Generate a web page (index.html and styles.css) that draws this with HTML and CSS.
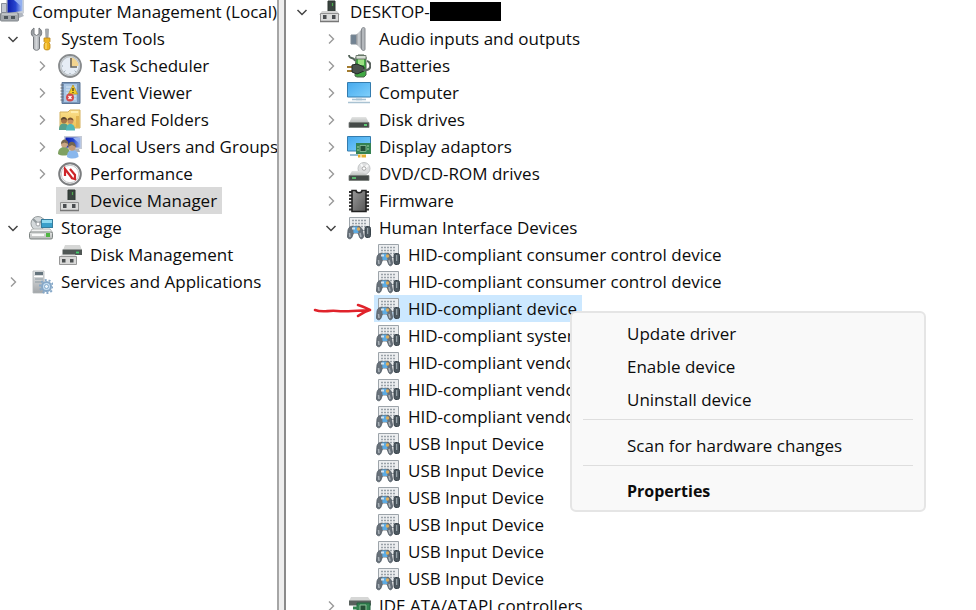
FILE: index.html
```
<!DOCTYPE html>
<html lang="en">
<head>
<meta charset="utf-8">
<title>Computer Management</title>
<link rel="stylesheet" href="styles.css">
</head>
<body>
<svg class="sprite" aria-hidden="true">
  <defs>
    <linearGradient id="metal" x1="0" y1="0" x2="0" y2="1"><stop offset="0" stop-color="#e6e8e9"/><stop offset="1" stop-color="#a2a6a9"/></linearGradient>
    <linearGradient id="metalx"><stop offset="0" stop-color="#8b8f94"/><stop offset=".5" stop-color="#d4d7da"/><stop offset="1" stop-color="#7e8389"/></linearGradient>
    <linearGradient id="screen" x1="0" y1="0" x2="1" y2="1"><stop offset="0" stop-color="#45a9ee"/><stop offset="1" stop-color="#7fd0fb"/></linearGradient>
    <linearGradient id="navy"><stop offset="0" stop-color="#0b1dab"/><stop offset=".55" stop-color="#2746cf"/><stop offset="1" stop-color="#a9c4f3"/></linearGradient>
    <linearGradient id="folder" x1="0" y1="0" x2="0" y2="1"><stop offset="0" stop-color="#fbe08c"/><stop offset="1" stop-color="#ecc258"/></linearGradient>
    <linearGradient id="slab" x1="0" y1="0" x2="0" y2="1"><stop offset="0" stop-color="#e4e5e4"/><stop offset="1" stop-color="#b6b9b8"/></linearGradient>
    <linearGradient id="chipfill" x1="0" y1="0" x2="1" y2="1"><stop offset="0" stop-color="#9a9a9a"/><stop offset="1" stop-color="#555"/></linearGradient>
  </defs>
  <symbol id="down" viewBox="0 0 12 12"><path d="M1.500 4l4.500 4.500 4.500-4.500" fill="none" stroke="#444" stroke-width="1.500"/></symbol>
  <symbol id="right" viewBox="0 0 12 12"><path d="M4 1.500l4.500 4.500-4.500 4.500" fill="none" stroke="#999" stroke-width="1.400"/></symbol>
  <symbol id="pc" viewBox="0 0 24 24">
    <path d="M6 0h18v13l-4 3H6z" fill="#c9ced6"/><path d="M7.500 0h15v11l-15 2z" fill="url(#navy)"/><path d="M14 0h8v7z" fill="#92aff0"/>
    <path d="M1.500 3.500h5v9h-5z" fill="#c2c7cf" stroke="#8a909b"/><path d="M16 13h6l2 3-5 2z" fill="#b0b6bf"/>
    <rect x=".5" y="13" width="18" height="8" rx="1" fill="#a3a8ac" stroke="#81878c"/><path d="M4 16h4v3H4zm7 0h4v3h-4z" fill="#4d565c"/><path d="M2 14h15" stroke="#e0e3e5"/>
  </symbol>
  <symbol id="tools" viewBox="0 0 24 24">
    <path d="M5 1v6l2.500 1.500L10 7V1c3.500 2 3.500 7 .5 9v11c0 3-6 3-6 0V10C1.500 8 1.500 3 5 1z" fill="url(#metalx)" stroke="#74787c"/>
    <path d="M16.500 2h3L19 12h-2z" fill="#a9adb0" stroke="#8f9397" stroke-width=".7"/><path d="M15 11h6v3.500l-1 1 1 2v4c-1 2-5 2-6 0v-4l1-2-1-1z" fill="#efb41f" stroke="#b98416" stroke-width=".8"/><path d="M17 16v6" stroke="#ffe382"/>
  </symbol>
  <symbol id="clock" viewBox="0 0 24 24">
    <circle cx="12" cy="12" r="11" fill="#e7eef5" stroke="#888b8d" stroke-width="1.800"/><circle cx="12" cy="12" r="9.300" fill="#e6edf5" stroke="#bcc2c6" stroke-width="1.300"/>
    <path d="M12 12V3.500A8.500 8.500 0 0 1 20.500 12z" fill="#f2d48f"/><path d="M13 4v9h6" fill="none" stroke="#6a655c" stroke-width="1.600"/><path d="M12 20v-1M4 12h1M6.300 17.700l1-1M17.700 17.700l-1-1" stroke="#8e9da9"/>
  </symbol>
  <symbol id="event" viewBox="0 0 24 24">
    <path d="M4 1.500h18v21H4z" fill="#7b99bd" stroke="#5d7696"/><path d="M6 3h13v18H6z" fill="#a9c6e4"/><path d="M8 6h10M8 9h10M8 12h10M8 15h10M8 18h10" stroke="#d8e7f4"/>
    <path d="M2.500 4h3m-3 3h3m-3 3h3m-3 3h3m-3 3h3m-3 3h3" stroke="#646c76" stroke-width="1.200"/>
    <path d="M15 4l4.500 9h-9z" fill="#f4ce29" stroke="#ba931a" stroke-width=".8"/><path d="M15 7v3m0 1v1" stroke="#443a16" stroke-width="1.300"/><circle cx="12" cy="16.500" r="4" fill="#d4494b"/><path d="M10.500 15l3 3m0-3l-3 3" stroke="#fff" stroke-width="1.200"/>
  </symbol>
  <symbol id="shared" viewBox="0 0 24 24">
    <path d="M2 4h8l2-2h10v18H2z" fill="url(#folder)" stroke="#d3b05f"/><path d="M13 4h7" stroke="#fff3be" stroke-width="1.500"/><path d="M18 8h3v11h-3z" fill="#e2b551"/>
    <path d="M1 22c0-5 2-6.500 5-6.500s4.500 2 4.500 6.500z" fill="#56a08c"/><circle cx="6" cy="12.500" r="3" fill="#a57446"/><path d="M2.800 12c.5-4 5.500-4 6.300 0l-3-1z" fill="#59452d"/>
    <path d="M8 22.500c0-5 2-6.500 4.500-6.500s4.500 2 4.500 6.500z" fill="#51b7b8"/><circle cx="12.500" cy="13" r="3" fill="#c89062"/><path d="M9.300 12.500c.5-4 5.500-4 6.300 0l-3-1z" fill="#77522f"/>
  </symbol>
  <symbol id="users" viewBox="0 0 24 24">
    <path d="M6 1h18v13H6z" fill="#c5cad5"/><path d="M7.500 2.500h15v10h-15z" fill="url(#navy)"/><path d="M15 3h7v6z" fill="#9bb5ee"/><path d="M14 14h7l1 3h-8z" fill="#b0b5bb"/>
    <path d="M0 19c0-5 3-7 6-7s6 2 6 7c-4 2-9 2-12 0z" fill="#7fa162"/><circle cx="6.500" cy="9" r="3.500" fill="#c9a583"/><path d="M3 9c0-6 7-6 7.500 0l-4-1.500z" fill="#77674f"/>
    <path d="M9 22c0-5 2-7 5.500-7s6 2 6 7c-4 2-8 2-11.500 0z" fill="#89b7ed"/><circle cx="14" cy="12" r="3.700" fill="#c39b78"/><path d="M10 12c0-7 7.500-7 8 0l-4-2z" fill="#74654e"/>
  </symbol>
  <symbol id="perf" viewBox="0 0 24 24">
    <circle cx="12" cy="12" r="10.800" fill="#f6f6f6" stroke="#7b7d7f" stroke-width="2"/><circle cx="12" cy="12" r="8.700" fill="#fff" stroke="#c4c5c7"/>
    <path d="M7 14V7l7 9M12 7l5 6v4l-4-1" fill="none" stroke="#ce2529" stroke-width="2.200"/>
  </symbol>
  <symbol id="device" viewBox="0 0 24 24">
    <path d="M10 1h7v11h-7z" fill="#39443f" stroke="#2c3431"/><path d="M14.500 3v3" stroke="#4ca64b" stroke-width="1.200"/><path d="M4 11h15l3 4H1z" fill="#d4d4d3"/>
    <path d="M2.500 13.500h18v8h-18z" fill="#dcdcdb" stroke="#929292"/><path d="M2 21.500h19" stroke="#777" stroke-width="1.500"/><path d="M5 15h3.500v4H5zm9 0h3.500v4H14z" fill="#4a4d50"/>
  </symbol>
  <symbol id="storage" viewBox="0 0 24 24">
    <circle cx="9" cy="7.500" r="7" fill="#d4d9db" stroke="#979d9e"/><path d="M9 8L4 3M9 8l6-5" stroke="#929a9d" stroke-width="2"/><circle cx="9" cy="8" r="2" fill="#fff" stroke="#9da2a6"/>
    <rect x="12.500" y="3.500" width="11" height="8" fill="#3ba0ca" stroke="#367d9d"/><path d="M13 4h10v3H13z" fill="#91daf0"/>
    <path d="M3 13h18l3 4H1z" fill="#f1f2f1" stroke="#b5b8b7"/><rect x=".5" y="16" width="23" height="7" rx="1.500" fill="url(#slab)" stroke="#7e8583"/><path d="M3 19h12" stroke="#f9faf9" stroke-width="2"/><path d="M17 17h4v4h-4z" fill="#50b542"/>
  </symbol>
  <symbol id="diskmgmt" viewBox="0 0 24 24">
    <path d="M7 2h15l2 5H5z" fill="#d6d7d6"/><path d="M4.500 6.500H24V12H4.500z" fill="#505755"/><path d="M18 9.500h3" stroke="#41d06b" stroke-width="1.800"/>
    <path d="M3.500 11.500H17l2 3H1.500z" fill="#e0e0df"/><path d="M1.500 13.500h17v8h-17z" fill="#d9d9d8" stroke="#979797"/><path d="M4 16h3.500v3.500H4zm8 0h3.500v3.500H12z" fill="#4c5051"/>
  </symbol>
  <symbol id="services" viewBox="0 0 24 24">
    <path d="M4 1h11v22H4z" fill="url(#metal)" stroke="#b1b6b9" stroke-width=".8"/><path d="M6 2h8v3H6z" fill="#65747d"/><path d="M6 9h8m-8 3h7" stroke="#8d9aa1"/><path d="M5 6.500h9" stroke="#fff"/>
    <circle cx="17.500" cy="16.500" r="6.500" fill="none" stroke="#86a8c8" stroke-width="2" stroke-dasharray="2 2"/><circle cx="17.500" cy="16.500" r="4.500" fill="#c8dff2" stroke="#86a8c8" stroke-width="2"/><circle cx="17.500" cy="16.500" r="2" fill="#edf5fb" stroke="#82a8c9"/>
  </symbol>
  <symbol id="audio" viewBox="0 0 24 24">
    <path d="M4 8h6v9H4z" fill="#718292" stroke="#7c8994"/><path d="M9 8l6-6v21l-6-6z" fill="url(#metalx)"/><path d="M14.500 2c1-2 3.500-2 3.500 0v20c0 2-2.500 2-3.500 0z" fill="#b4b8bc" stroke="#85898e"/>
  </symbol>
  <symbol id="battery" viewBox="0 0 24 24">
    <path d="M9 3l2-2h6l2 2v18l-2 2h-7l-2-1z" fill="#40a943" stroke="#4c614c"/><path d="M11 5h6v6h-6z" fill="#9be183"/><path d="M9 1.500h10V5H9z" fill="#d6ddd4" stroke="#5d685f" stroke-width=".8"/><path d="M2 1c0 5 5 1 6 6" fill="none" stroke="#54645a" stroke-width="1.800"/>
    <path d="M0 13h6m-6 4h6" stroke="#a37c30" stroke-width="2"/><path d="M5 11l5-1 7 3v4l-7 3-5-2z" fill="#4a524e" stroke="#222a27"/><path d="M16 16c9 2 9-8 4-9" fill="none" stroke="#59625d" stroke-width="2.200"/>
  </symbol>
  <symbol id="computer" viewBox="0 0 24 24">
    <path d="M.5 1.500h23V16H.5z" fill="url(#screen)" stroke="#347cae"/><path d="M9 17h6v2.500H9z" fill="#d6e3eb"/><path d="M5 18.500h14M1 21.500h22" stroke="#a9c2d2" stroke-width="1.500"/>
  </symbol>
  <symbol id="disk" viewBox="0 0 24 24">
    <path d="M5 9h14l3 6H2z" fill="url(#slab)"/><path d="M2 14.500h20v5H2z" fill="#454a48" stroke="#777c79" stroke-width=".8"/><path d="M17 17h3" stroke="#5fd879" stroke-width="1.800"/>
  </symbol>
  <symbol id="display" viewBox="0 0 24 24">
    <path d="M.5 1.500h23V16H.5z" fill="url(#screen)" stroke="#347cae"/><path d="M3 20h8" stroke="#9abed4" stroke-width="2"/><path d="M9 8h15v11H9z" fill="#358253"/><path d="M13 10.500h6v6h-6z" fill="#254f38" stroke="#7cb38d"/><path d="M20 11h2m-2 3h2m-12-2h2m-2 3h2" stroke="#a0d2a5"/><path d="M11 19.500h8v3h-8z" fill="#e5af32"/><path d="M14 20v3" stroke="#fff"/>
  </symbol>
  <symbol id="dvd" viewBox="0 0 24 24">
    <circle cx="17" cy="6.500" r="6" fill="#dedfe0" stroke="#c0c3c4"/><path d="M17 7l-3-5m3 5l4-4" stroke="#f8f9f9" stroke-width="2"/><circle cx="17" cy="6.500" r="1.800" fill="#fff" stroke="#aaa"/>
    <path d="M5 9h9l8 5H2z" fill="url(#slab)"/><path d="M2 13.500h20v5H2z" fill="#454a48" stroke="#777c79" stroke-width=".8"/><path d="M5 16h4" stroke="#5fd879" stroke-width="1.500"/>
  </symbol>
  <symbol id="firmware" viewBox="0 0 24 24">
    <path d="M4 2v20M20 2v20" stroke="#333" stroke-width="4" stroke-dasharray="2 1.500"/><path d="M5 1.500h4c0 3 6 3 6 0h4v21H5z" fill="url(#chipfill)" stroke="#222" stroke-width="1.600"/>
  </symbol>
  <symbol id="hid" viewBox="0 0 24 24">
    <path d="M2.500 1.500h20v13h-20z" fill="#eceef0" stroke="#9da4aa"/><path d="M5 4.500h15M5 7.500h15M5 10.500h15" stroke="#9aa2a9" stroke-width="1.500" stroke-dasharray="2 1"/>
    <path d="M1 14c1-4 4-4 7-3.500 3-.5 6-.5 7.500 3.500l1 6c0 3-3 4-4 1l-1.500-4H6.500L5 21c-1 3-5 2-4.500-1z" fill="#68717a" stroke="#515b64" stroke-width=".8"/><path d="M2.500 17l.5 4m10-4l1 4" stroke="#aab2b9" stroke-width="1.500"/>
    <path d="M6 10.500h4.500l1 6.500H6.500z" fill="#5dabe2"/><path d="M5 12.500h3" stroke="#d4e3ee" stroke-width="2"/><circle cx="11.500" cy="13" r="1.700" fill="#dcae5e"/>
    <rect x="18" y="10.500" width="5.500" height="11" rx="2" fill="#4e5961" stroke="#38434b"/><path d="M20.700 12v6" stroke="#a8b3ba"/>
  </symbol>
  <symbol id="ide" viewBox="0 0 24 24">
    <path d="M4 3h17l3 4H2z" fill="#d6d7d6"/><path d="M2 6.500h22v5H2z" fill="#59605d"/><path d="M10 9h13v12H10z" fill="#338451" stroke="#23613e"/><path d="M13 11h6v6h-6z" fill="#244e35" stroke="#8abc96"/><path d="M6 14h5" stroke="#338451" stroke-width="3"/>
  </symbol>
</svg>

<main class="window">
  <nav class="pane console" aria-label="Console tree">
    <ul class="tree">
      <li><div class="row root"><a class="label" href="#"><svg class="icon"><use href="#pc"/></svg>Computer Management (Local)</a></div>
      <ul>
        <li><div class="row"><button class="toggle" aria-label="Collapse"><svg><use href="#down"/></svg></button><a class="label" href="#"><svg class="icon"><use href="#tools"/></svg>System Tools</a></div>
          <ul class="nested">
            <li class="row"><button class="toggle" aria-label="Expand"><svg><use href="#right"/></svg></button><a class="label" href="#"><svg class="icon"><use href="#clock"/></svg>Task Scheduler</a></li>
            <li class="row"><button class="toggle" aria-label="Expand"><svg><use href="#right"/></svg></button><a class="label" href="#"><svg class="icon"><use href="#event"/></svg>Event Viewer</a></li>
            <li class="row"><button class="toggle" aria-label="Expand"><svg><use href="#right"/></svg></button><a class="label" href="#"><svg class="icon"><use href="#shared"/></svg>Shared Folders</a></li>
            <li class="row"><button class="toggle" aria-label="Expand"><svg><use href="#right"/></svg></button><a class="label" href="#"><svg class="icon"><use href="#users"/></svg>Local Users and Groups</a></li>
            <li class="row"><button class="toggle" aria-label="Expand"><svg><use href="#right"/></svg></button><a class="label" href="#"><svg class="icon"><use href="#perf"/></svg>Performance</a></li>
            <li class="row"><span class="toggle"></span><a class="label current" href="#"><svg class="icon"><use href="#device"/></svg>Device Manager</a></li>
          </ul></li>
        <li><div class="row"><button class="toggle" aria-label="Collapse"><svg><use href="#down"/></svg></button><a class="label" href="#"><svg class="icon"><use href="#storage"/></svg>Storage</a></div>
          <ul class="nested">
            <li class="row"><span class="toggle"></span><a class="label" href="#"><svg class="icon"><use href="#diskmgmt"/></svg>Disk Management</a></li>
          </ul></li>
        <li class="row"><button class="toggle" aria-label="Expand"><svg><use href="#right"/></svg></button><a class="label" href="#"><svg class="icon"><use href="#services"/></svg>Services and Applications</a></li>
      </ul></li>
    </ul>
  </nav>
  <div class="splitter"></div>
  <section class="pane devices" aria-label="Devices">
    <ul class="tree">
      <li><div class="row"><button class="toggle" aria-label="Collapse"><svg><use href="#down"/></svg></button><a class="label" href="#"><svg class="icon"><use href="#device"/></svg>DESKTOP-<span class="redacted"></span></a></div>
      <ul class="nested">
        <li class="row"><button class="toggle" aria-label="Expand"><svg><use href="#right"/></svg></button><a class="label" href="#"><svg class="icon"><use href="#audio"/></svg>Audio inputs and outputs</a></li>
        <li class="row"><button class="toggle" aria-label="Expand"><svg><use href="#right"/></svg></button><a class="label" href="#"><svg class="icon"><use href="#battery"/></svg>Batteries</a></li>
        <li class="row"><button class="toggle" aria-label="Expand"><svg><use href="#right"/></svg></button><a class="label" href="#"><svg class="icon"><use href="#computer"/></svg>Computer</a></li>
        <li class="row"><button class="toggle" aria-label="Expand"><svg><use href="#right"/></svg></button><a class="label" href="#"><svg class="icon"><use href="#disk"/></svg>Disk drives</a></li>
        <li class="row"><button class="toggle" aria-label="Expand"><svg><use href="#right"/></svg></button><a class="label" href="#"><svg class="icon"><use href="#display"/></svg>Display adaptors</a></li>
        <li class="row"><button class="toggle" aria-label="Expand"><svg><use href="#right"/></svg></button><a class="label" href="#"><svg class="icon"><use href="#dvd"/></svg>DVD/CD-ROM drives</a></li>
        <li class="row"><button class="toggle" aria-label="Expand"><svg><use href="#right"/></svg></button><a class="label" href="#"><svg class="icon"><use href="#firmware"/></svg>Firmware</a></li>
        <li><div class="row"><button class="toggle" aria-label="Collapse"><svg><use href="#down"/></svg></button><a class="label" href="#"><svg class="icon"><use href="#hid"/></svg>Human Interface Devices</a></div>
          <ul class="nested">
            <li class="row"><span class="toggle"></span><a class="label" href="#"><svg class="icon"><use href="#hid"/></svg>HID-compliant consumer control device</a></li>
            <li class="row"><span class="toggle"></span><a class="label" href="#"><svg class="icon"><use href="#hid"/></svg>HID-compliant consumer control device</a></li>
            <li class="row marked"><svg class="arrow" viewBox="0 0 60 18" aria-hidden="true"><path d="M3 9c8 3 13 0 22 1s18 0 33-1M46 4c4 1 8 3 12 5-4 1-8 3-12 6" fill="none" stroke="#e0232b" stroke-width="2.600" stroke-linecap="round" stroke-linejoin="round"/></svg><span class="toggle"></span><a class="label selected" href="#"><svg class="icon"><use href="#hid"/></svg>HID-compliant device</a></li>
            <li class="row"><span class="toggle"></span><a class="label" href="#"><svg class="icon"><use href="#hid"/></svg>HID-compliant system</a></li>
            <li class="row"><span class="toggle"></span><a class="label" href="#"><svg class="icon"><use href="#hid"/></svg>HID-compliant vendor</a></li>
            <li class="row"><span class="toggle"></span><a class="label" href="#"><svg class="icon"><use href="#hid"/></svg>HID-compliant vendor</a></li>
            <li class="row"><span class="toggle"></span><a class="label" href="#"><svg class="icon"><use href="#hid"/></svg>HID-compliant vendor</a></li>
            <li class="row"><span class="toggle"></span><a class="label" href="#"><svg class="icon"><use href="#hid"/></svg>USB Input Device</a></li>
            <li class="row"><span class="toggle"></span><a class="label" href="#"><svg class="icon"><use href="#hid"/></svg>USB Input Device</a></li>
            <li class="row"><span class="toggle"></span><a class="label" href="#"><svg class="icon"><use href="#hid"/></svg>USB Input Device</a></li>
            <li class="row"><span class="toggle"></span><a class="label" href="#"><svg class="icon"><use href="#hid"/></svg>USB Input Device</a></li>
            <li class="row"><span class="toggle"></span><a class="label" href="#"><svg class="icon"><use href="#hid"/></svg>USB Input Device</a></li>
            <li class="row"><span class="toggle"></span><a class="label" href="#"><svg class="icon"><use href="#hid"/></svg>USB Input Device</a></li>
          </ul></li>
        <li class="row"><button class="toggle" aria-label="Expand"><svg><use href="#right"/></svg></button><a class="label" href="#"><svg class="icon"><use href="#ide"/></svg>IDE ATA/ATAPI controllers</a></li>
      </ul></li>
    </ul>
  </section>
  <div class="menu" role="menu">
    <button role="menuitem">Update driver</button>
    <button role="menuitem">Enable device</button>
    <button role="menuitem">Uninstall device</button>
    <hr>
    <button role="menuitem">Scan for hardware changes</button>
    <hr>
    <button role="menuitem" class="default">Properties</button>
  </div>
</main>
</body>
</html>
```
FILE: styles.css
```
* { box-sizing: border-box; }

body {
  margin: 0;
  background: #fff;
  color: #0c0c0c;
  font: 17px/27px "Open Sans", "Noto Sans", sans-serif;
}

.sprite { position: absolute; width: 0; height: 0; }

.window {
  position: relative;
  display: flex;
  height: 100vh;
  overflow: hidden;
}

.pane { overflow: hidden; }
.console { flex: 0 0 277px; }
.devices { flex: 1; padding-left: 3px; }

.splitter {
  flex: 0 0 9px;
  background: #eee;
  border-left: 2px solid #a6a6a6;
  border-right: 2px solid #8a8a8a;
}

ul { margin: 0; padding: 0; list-style: none; }
.tree { margin-top: -2px; }
.nested { padding-left: 29px; }

.row {
  display: flex;
  height: 27px;
  white-space: nowrap;
}

.toggle {
  flex: none;
  display: grid;
  place-items: center;
  width: 27px;
  padding: 0 2px 0 0;
  border: 0;
  background: none;
}
.toggle svg { width: 12px; height: 12px; }

.label {
  display: flex;
  align-items: center;
  padding: 0 5px 0 2px;
  color: inherit;
  text-decoration: none;
}
.icon { flex: none; width: 24px; height: 24px; margin-right: 8px; }
.root .label { padding-left: 0; }

.current { background: #d9d9d9; }
.selected { background: #cce8ff; }

.redacted { width: 71px; height: 19px; background: #000; }

.marked { position: relative; width: max-content; }
.arrow {
  position: absolute;
  right: 100%;
  top: 6px;
  width: 60px;
  height: 18px;
  margin-right: -25px;
}

.menu {
  position: absolute;
  left: 570px;
  top: 311px;
  width: 356px;
  padding: 4px 11px 2px;
  border: 2px solid #e5e5e5;
  border-radius: 6px;
  background: #f9f9f9;
}
.menu button {
  display: block;
  width: 100%;
  height: 33px;
  padding: 0 44px;
  border: 0;
  background: none;
  color: inherit;
  font: inherit;
  text-align: left;
}
.menu .default { font-size: 16px; font-weight: 700; }
.menu hr {
  height: 1px;
  margin: 3px 0 9px;
  border: 0;
  background: #dedede;
}
```
